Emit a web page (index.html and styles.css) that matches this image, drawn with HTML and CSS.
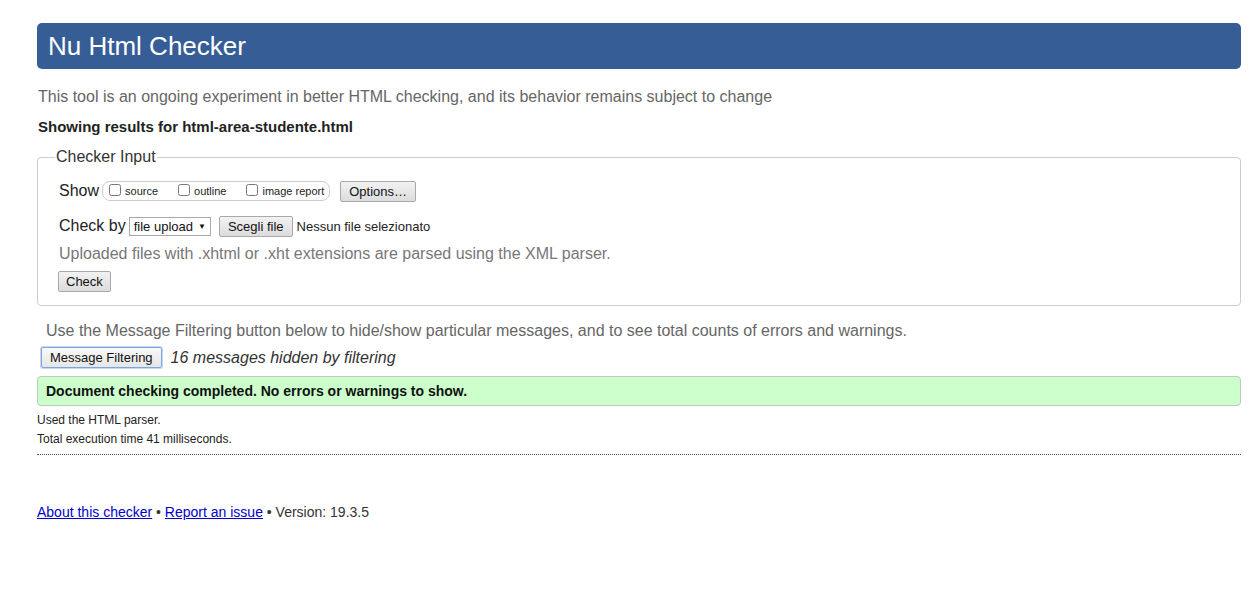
FILE: index.html
```html
<!DOCTYPE html>
<html lang="en">
<head>
  <meta charset="UTF-8">
  <title>Showing results for html-area-studente.html - Nu Html Checker</title>
  <link rel="stylesheet" href="styles.css">
</head>
<body>
<div class="page">

<h1><a href="#">Nu Html Checker</a></h1>
<p class="intro">This tool is an ongoing experiment in better HTML checking, and its behavior remains subject to change</p>
<p class="results">Showing results for html-area-studente.html</p>

<!-- CHECKER INPUT -->
<fieldset class="checker">
  <legend>Checker Input</legend>
  <div class="row">
    <span class="lbl">Show</span>
    <span class="showgroup">
      <label><input type="checkbox"> source</label>
      <label><input type="checkbox"> outline</label>
      <label><input type="checkbox"> image report</label>
    </span>
    <button type="button" class="btn">Options…</button>
  </div>
  <div class="row">
    <span class="lbl">Check by</span>
    <span class="sel">file upload <span class="arrow">▼</span></span>
    <button type="button" class="btn">Scegli file</button>
    <span class="nofile">Nessun file selezionato</span>
  </div>
  <p class="hint">Uploaded files with .xhtml or .xht extensions are parsed using the XML parser.</p>
  <button type="button" class="btn btn-check">Check</button>
</fieldset>

<p class="filter-note">Use the Message Filtering button below to hide/show particular messages, and to see total counts of errors and warnings.</p>
<div class="filter-row">
  <button type="button" class="btn btn-focus">Message Filtering</button>
  <em>16 messages hidden by filtering</em>
</div>

<div class="success">Document checking completed. No errors or warnings to show.</div>

<p class="details">Used the HTML parser.</p>
<p class="details">Total execution time 41 milliseconds.</p>
<hr>

<footer>
  <a href="#">About this checker</a> • <a href="#">Report an issue</a> • Version: 19.3.5
</footer>

</div>
</body>
</html>
```

FILE: styles.css
```css
body { margin: 0; font-family: "Liberation Sans", Arial, sans-serif; background: #fff; color: #222; }
.page { padding: 23px 9px 0 37px; }

h1 {
  margin: 0;
  height: 46px;
  background: #365d95;
  border-radius: 5px;
  font-size: 26px;
  font-weight: normal;
  line-height: 46px;
  padding-left: 11px;
}
h1 a { color: #fff; text-decoration: none; }

.intro { margin: 18px 0 0 1px; font-size: 16px; line-height: 20px; color: #666; }
.results { margin: 10px 0 0 1px; font-size: 15px; font-weight: bold; line-height: 20px; color: #222; }

.checker {
  margin: 11px 0 0 0;
  padding: 13px 20px 13px 21px;
  border: 1px solid #ccc;
  border-radius: 4px;
}
.checker legend { font-size: 16px; color: #333; padding: 0 1px; margin-left: -4px; }

.row { display: flex; align-items: center; height: 24px; margin-bottom: 11px; }
.row + .row { margin-bottom: 6px; }
.lbl { font-size: 16px; color: #222; margin-right: 3px; }

.showgroup {
  display: inline-flex;
  align-items: center;
  height: 18px;
  border: 1px solid #ccc;
  border-radius: 8px;
  padding: 0 5px 0 6px;
  margin-right: 10px;
}
.showgroup label { font-size: 11px; color: #222; display: inline-flex; align-items: center; margin-right: 20px; }
.showgroup label:last-child { margin-right: 0; }
.showgroup input { margin: 0 4px 2px 0; width: 12px; height: 12px; }

.btn {
  font-family: "Liberation Sans", Arial, sans-serif;
  font-size: 13px;
  color: #111;
  background: linear-gradient(#f2f2f2, #dcdcdc);
  border: 1px solid #a9a9a9;
  border-radius: 2px;
  height: 21px;
  padding: 0 8px;
}
.btn-check { margin-left: -1px; padding: 0 7px; }
.btn-focus { border-color: #7fa6dc; background: linear-gradient(#f8f8f8, #e6e6e6); box-shadow: 0 0 0 1px #c5d8f2; }

.sel {
  display: inline-flex;
  align-items: center;
  height: 17px;
  padding: 0 4px;
  border: 1px solid #a9a9a9;
  font-size: 13px;
  color: #111;
  margin-right: 8px;
}
.sel .arrow { font-size: 8px; margin-left: 5px; }
.nofile { font-size: 13px; color: #222; margin-left: 4px; }

.hint { margin: 0 0 7px 0; font-size: 16px; line-height: 20px; color: #777; }

.filter-note { margin: 15px 0 0 9px; font-size: 16px; line-height: 20px; color: #666; }
.filter-row { display: flex; align-items: center; margin: 6px 0 0 4px; }
.filter-row em { font-size: 16px; color: #333; margin-left: 9px; }

.success {
  margin-top: 8px;
  background: #ccffcc;
  border: 1px solid #bccbbc;
  border-radius: 4px;
  padding: 0 8px;
  height: 28px;
  line-height: 28px;
  font-size: 14px;
  font-weight: bold;
  color: #111;
}

.details { margin: 0; font-size: 12px; color: #222; line-height: 19px; }
.success + .details { margin-top: 5px; }

hr { margin: 5px 0 0 0; border: 0; border-top: 1px dotted #555; }

footer { margin-top: 49px; font-size: 14px; color: #333; }
footer a { color: #00c; }
```
